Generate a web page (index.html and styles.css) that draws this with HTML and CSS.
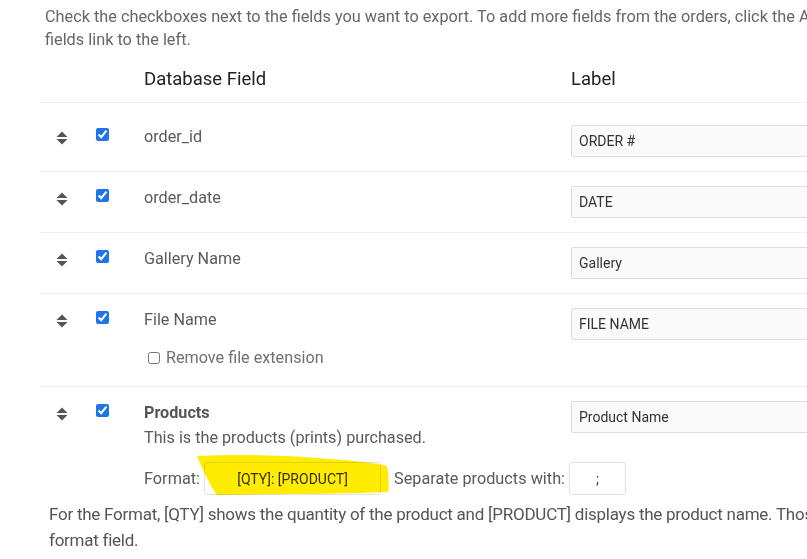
FILE: index.html
```html
<!DOCTYPE html>
<html>
<head>
<meta charset="utf-8">
<link rel="stylesheet" href="styles.css">
</head>
<body>
<div class="page">
  <p class="intro">Check the checkboxes next to the fields you want to export. To add more fields from the orders, click the Add Order<br>fields link to the left.</p>

  <div class="table">
    <div class="row head">
      <div></div><div></div>
      <div class="cell-field">Database Field</div>
      <div class="cell-label">Label</div>
    </div>

    <div class="row first">
      <div class="sort"><svg width="12" height="14" viewBox="0 0 12 14"><path d="M6 0.5 L11.5 6 H0.5 Z M0.5 8 H11.5 L6 13.5 Z" fill="#555"/></svg></div>
      <div class="chk"><input type="checkbox" checked></div>
      <div class="cell-field"><div class="fname">order_id</div></div>
      <div class="cell-label"><input class="txt" type="text" value="ORDER #"></div>
    </div>

    <div class="row">
      <div class="sort"><svg width="12" height="14" viewBox="0 0 12 14"><path d="M6 0.5 L11.5 6 H0.5 Z M0.5 8 H11.5 L6 13.5 Z" fill="#555"/></svg></div>
      <div class="chk"><input type="checkbox" checked></div>
      <div class="cell-field"><div class="fname">order_date</div></div>
      <div class="cell-label"><input class="txt" type="text" value="DATE"></div>
    </div>

    <div class="row">
      <div class="sort"><svg width="12" height="14" viewBox="0 0 12 14"><path d="M6 0.5 L11.5 6 H0.5 Z M0.5 8 H11.5 L6 13.5 Z" fill="#555"/></svg></div>
      <div class="chk"><input type="checkbox" checked></div>
      <div class="cell-field"><div class="fname">Gallery Name</div></div>
      <div class="cell-label"><input class="txt" type="text" value="Gallery"></div>
    </div>

    <div class="row tall">
      <div class="sort"><svg width="12" height="14" viewBox="0 0 12 14"><path d="M6 0.5 L11.5 6 H0.5 Z M0.5 8 H11.5 L6 13.5 Z" fill="#555"/></svg></div>
      <div class="chk"><input type="checkbox" checked></div>
      <div class="cell-field">
        <div class="fname">File Name</div>
        <label class="opt"><input type="checkbox" class="small">Remove file extension</label>
      </div>
      <div class="cell-label"><input class="txt" type="text" value="FILE NAME"></div>
    </div>

    <div class="row last">
      <div class="sort"><svg width="12" height="14" viewBox="0 0 12 14"><path d="M6 0.5 L11.5 6 H0.5 Z M0.5 8 H11.5 L6 13.5 Z" fill="#555"/></svg></div>
      <div class="chk"><input type="checkbox" checked></div>
      <div class="cell-field">
        <div class="fname bold">Products</div>
        <div class="desc">This is the products (prints) purchased.</div>
        <div class="format">
          <span>Format:</span>
          <span class="fmtwrap">
            <input class="fmt" type="text" value="[QTY]: [PRODUCT]">
            <svg class="hl" width="200" height="46" viewBox="0 0 200 46"><path d="M2 2 C40 0 80 1 120 4 C150 6 175 8 192 12 C194 22 194 32 193 38 C150 40 90 40 22 41 C14 30 8 16 2 2 Z" fill="#ffec00"/></svg>
          </span>
          <span class="sep">Separate products with:</span>
          <input class="sepin" type="text" value=";">
        </div>
      </div>
      <div class="cell-label"><input class="txt" type="text" value="Product Name"></div>
    </div>
  </div>

  <p class="note">For the Format, [QTY] shows the quantity of the product and [PRODUCT] displays the product name. Those tags can be rearranged in the<br>format field.</p>
</div>
</body>
</html>
```

FILE: styles.css
```css
html, body {
  margin: 0;
  padding: 0;
  overflow: hidden;
  background: #fff;
}
body {
  font-family: Roboto, "Liberation Sans", sans-serif;
  width: 807px;
  height: 559px;
}
.page {
  width: 1000px;
}
.intro {
  margin: 5px 0 0 45px;
  font-size: 16.3px;
  line-height: 23px;
  color: #666;
  white-space: nowrap;
}
.table {
  margin-left: 40px;
  margin-top: 0;
}
.row {
  display: grid;
  grid-template-columns: 42px 41px 448px 1fr;
  border-bottom: 1px solid #eee;
  padding: 14px 0;
  align-items: start;
}
.row.head {
  padding: 15px 0 9px;
  font-size: 18.5px;
  line-height: 27px;
  color: #222;
  border-bottom: 1px solid #eee;
}
.row.first {
  padding-top: 22px;
  padding-bottom: 14px;
}
.row.tall {
  padding-bottom: 16px;
}
.row.last {
  border-bottom: none;
  padding-bottom: 6px;
}
.cell-field {
  padding-left: 21px;
}
.sort {
  display: flex;
  justify-content: center;
  padding-top: 6px;
  padding-left: 1px;
}
.sort svg { display: block; }
.chk {
  display: flex;
  justify-content: center;
  padding-top: 3px;
}
.chk input {
  margin: 0;
  width: 13px;
  height: 13px;
  accent-color: #1f74e8;
}
.fname {
  font-size: 16.2px;
  line-height: 24px;
  color: #5a5a5a;
}
.fname.bold {
  font-weight: bold;
  color: #555;
}
.opt {
  display: flex;
  align-items: center;
  margin-top: 14px;
  margin-left: 4px;
  font-size: 16.2px;
  line-height: 24px;
  color: #707070;
}
.opt input {
  margin: 0 6px 0 0;
  width: 12px;
  height: 12px;
}
.desc {
  font-size: 16.2px;
  line-height: 24px;
  color: #5a5a5a;
  margin-top: 1px;
}
.format {
  display: flex;
  align-items: center;
  margin-top: 12px;
  font-size: 16.3px;
  color: #5a5a5a;
  white-space: nowrap;
}
.fmtwrap {
  position: relative;
  display: inline-block;
  margin-left: 4px;
}
.fmt {
  display: block;
  width: 177px;
  height: 33px;
  box-sizing: border-box;
  border: 1px solid #e2e2e2;
  border-radius: 3px;
  background: #fff;
  font-family: Roboto, "Liberation Sans", sans-serif;
  font-size: 14px;
  color: #333;
  text-align: center;
  padding: 0;
}
.hl {
  position: absolute;
  left: -9px;
  top: -8px;
  mix-blend-mode: multiply;
  pointer-events: none;
}
.sep {
  margin-left: 13px;
}
.sepin {
  width: 57px;
  height: 33px;
  box-sizing: border-box;
  margin-left: 4px;
  border: 1px solid #e2e2e2;
  border-radius: 3px;
  background: #fff;
  font-family: Roboto, "Liberation Sans", sans-serif;
  font-size: 14px;
  color: #333;
  text-align: center;
  padding: 0;
}
.txt {
  display: block;
  width: 300px;
  height: 32px;
  box-sizing: border-box;
  border: 1px solid #dedede;
  border-radius: 2px;
  background: #fafafa;
  font-family: Roboto, "Liberation Sans", sans-serif;
  font-size: 14px;
  color: #333;
  padding: 0 0 0 7px;
}
.note {
  margin: 0 0 0 49px;
  font-size: 17px;
  line-height: 26px;
  color: #555;
  white-space: nowrap;
  letter-spacing: -0.25px;
}
```
